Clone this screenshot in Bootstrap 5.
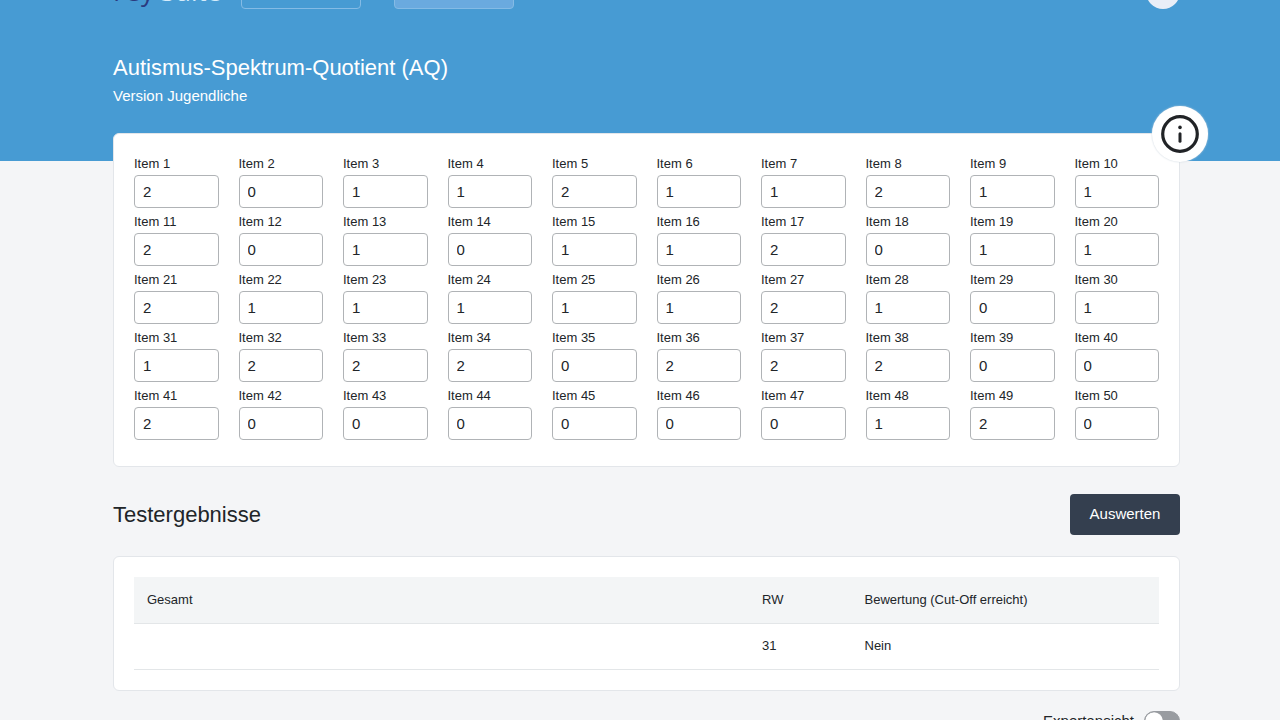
<!DOCTYPE html>
<html lang="de">
<head>
<meta charset="utf-8">
<meta name="viewport" content="width=device-width, initial-scale=1">
<title>Autismus-Spektrum-Quotient (AQ)</title>
<link rel="stylesheet" href="https://cdn.jsdelivr.net/npm/bootstrap@5.3.0/dist/css/bootstrap.min.css">
<style>
  body { background: #f4f5f7; color: #212529; font-family: "Liberation Sans", Arial, sans-serif; font-size: 13px; line-height: 20px; }
  .page-view { height: 100vh; overflow: hidden; }
  .gutter { padding-left: 113px; padding-right: 100px; }
  .hero { background: #479bd3; color: #fff; height: 161px; }
  /* the bar is scrolled partly out of view */
  .topbar { margin-top: -31px; height: 40px; }
  .brand { width: 128px; padding-top: 4px; font-size: 26px; line-height: 40px; color: #d5ecfb; font-family: "Open Sans", sans-serif; text-decoration: none; }
  .brand-dark { color: #2b3a80; }
  .top-btn { width: 120px; height: 40px; border: 1px solid #84bbe5; border-radius: 4px; }
  .top-btn.filled { background: #6aaadf; margin-left: 33px; }
  .avatar { width: 34px; height: 34px; background: #e9eef7; }
  .page-title { font-size: 22px; line-height: 28px; margin: 45px 0 0; font-weight: 400; }
  .section-title { font-size: 22px; line-height: 28px; margin: 0; font-weight: 400; }
  .subtitle { font-size: 15px; line-height: 28px; margin: 0; }
  .panel { border: 1px solid #e3e6ea; border-radius: 6px; }
  .items-panel { margin-top: -28px; padding: 16px 20px 26px; }
  .item-grid { display: grid; grid-template-columns: repeat(10, minmax(0, 1fr)); column-gap: 20px; }
  .item-grid label { display: block; padding-top: 2px; line-height: 23px; }
  .item-grid .form-control { height: 33px; padding: 0 8px 1px; border-color: #b0b3b6; border-radius: 4px; font-size: 15px; color: #212529; }
  .info-btn { top: -28px; right: -29px; width: 56px; height: 56px; background: #fff; border: 0; box-shadow: 0 0 2px #c9d3dc; }
  .results-head { margin: 27px 0 21px; }
  .btn-eval { width: 110px; height: 41px; background: #343f4f; color: #fff; font-size: 15px; border-radius: 4px; border: 0; padding: 0; }
  .btn-eval:hover { background: #465468; color: #fff; }
  .results-panel { padding: 20px; }
  .result-table { table-layout: fixed; margin: 0; --bs-table-bg: transparent; }
  .result-table th, .result-table td { height: 46px; padding: 0 13px; font-weight: 400; vertical-align: middle; border-bottom: 1px solid #e3e6e8; color: #212529; }
  .result-table th { background: #f3f5f6; }
  .expert { margin-top: 20px; font-size: 15px; gap: 10px; }
  .expert .form-check-input { width: 36px; height: 20px; margin: 0; background-color: #999ca1; border-color: #999ca1; --bs-form-switch-bg: url("data:image/svg+xml,%3csvg xmlns='http://www.w3.org/2000/svg' viewBox='-4 -4 8 8'%3e%3ccircle r='3.9' fill='%23fff'/%3e%3c/svg%3e"); }
</style>
</head>
<body>
<div class="page-view">
  <header class="hero gutter overflow-hidden">
    <nav class="topbar d-flex align-items-center" aria-label="Hauptnavigation">
      <a class="brand" href="#"><span class="brand-dark">Psy</span> Suite</a>
      <button type="button" class="top-btn bg-transparent" aria-label="Menü"></button>
      <button type="button" class="top-btn filled" aria-label="Tests"></button>
      <button type="button" class="avatar rounded-circle border-0 ms-auto align-self-end" aria-label="Konto"></button>
    </nav>
    <h1 class="page-title">Autismus-Spektrum-Quotient (AQ)</h1>
    <p class="subtitle">Version Jugendliche</p>
  </header>
  <main class="gutter">
    <section class="panel items-panel bg-white position-relative">
      <button type="button" class="info-btn position-absolute rounded-circle d-flex align-items-center justify-content-center p-0" aria-label="Information">
        <svg width="38" height="38" viewBox="0 0 38 38" fill="none" stroke="#212326"><circle cx="19" cy="19" r="17.3" stroke-width="3.2"/><path d="M19 18.800v7.400" stroke-width="3" stroke-linecap="round"/><circle cx="19" cy="12.400" r="1.800" fill="#212326" stroke="none"/></svg>
      </button>
      <div class="item-grid" id="items"></div>
    </section>
    <div class="results-head d-flex justify-content-between align-items-center">
      <h2 class="section-title">Testergebnisse</h2>
      <button type="button" class="btn btn-eval">Auswerten</button>
    </div>
    <section class="panel results-panel bg-white">
      <table class="table result-table">
        <colgroup><col style="width:60%"><col style="width:10%"><col style="width:30%"></colgroup>
        <thead><tr><th scope="col">Gesamt</th><th scope="col">RW</th><th scope="col">Bewertung (Cut-Off erreicht)</th></tr></thead>
        <tbody><tr><td></td><td>31</td><td>Nein</td></tr></tbody>
      </table>
    </section>
    <div class="expert form-switch d-flex justify-content-end align-items-center p-0">
      <label for="expert">Expertansicht</label>
      <input class="form-check-input" type="checkbox" role="switch" id="expert">
    </div>
  </main>
</div>
<script src="https://cdn.jsdelivr.net/npm/bootstrap@5.3.0/dist/js/bootstrap.bundle.min.js"></script>
<script>
  const answers = "20112112112010112011" + "21111121011222022200" + "2000000120";
  document.getElementById("items").innerHTML = [...answers].map((v, i) =>
    `<div><label for="item${i + 1}">Item ${i + 1}</label><input class="form-control" type="text" inputmode="numeric" id="item${i + 1}" value="${v}"></div>`).join("");
</script>
</body>
</html>
